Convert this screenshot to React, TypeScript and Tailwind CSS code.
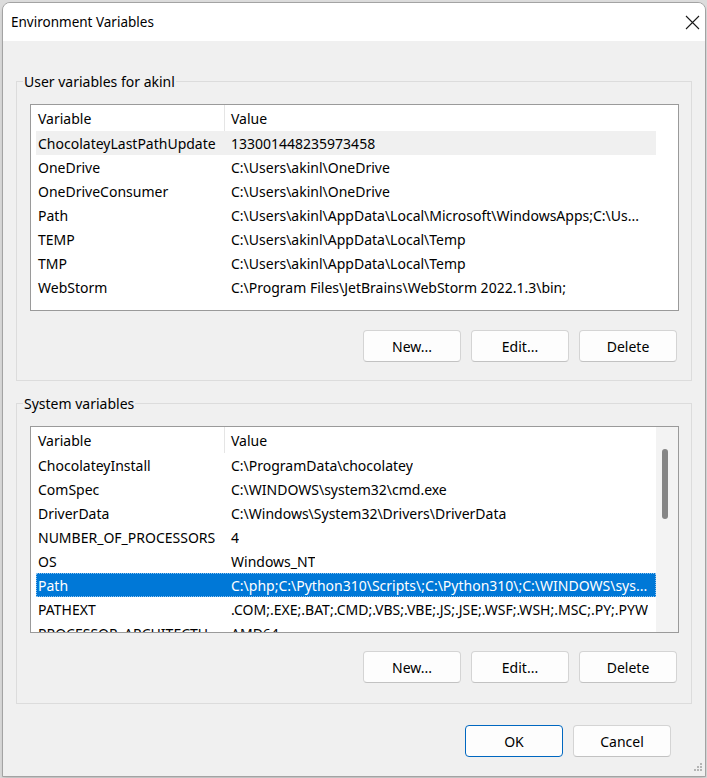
import React from 'react';

const userVars = [
  ['ChocolateyLastPathUpdate', '133001448235973458'],
  ['OneDrive', 'C:\\Users\\akinl\\OneDrive'],
  ['OneDriveConsumer', 'C:\\Users\\akinl\\OneDrive'],
  ['Path', 'C:\\Users\\akinl\\AppData\\Local\\Microsoft\\WindowsApps;C:\\Us...'],
  ['TEMP', 'C:\\Users\\akinl\\AppData\\Local\\Temp'],
  ['TMP', 'C:\\Users\\akinl\\AppData\\Local\\Temp'],
  ['WebStorm', 'C:\\Program Files\\JetBrains\\WebStorm 2022.1.3\\bin;'],
];

const systemVars = [
  ['ChocolateyInstall', 'C:\\ProgramData\\chocolatey'],
  ['ComSpec', 'C:\\WINDOWS\\system32\\cmd.exe'],
  ['DriverData', 'C:\\Windows\\System32\\Drivers\\DriverData'],
  ['NUMBER_OF_PROCESSORS', '4'],
  ['OS', 'Windows_NT'],
  ['Path', 'C:\\php;C:\\Python310\\Scripts\\;C:\\Python310\\;C:\\WINDOWS\\sys...'],
  ['PATHEXT', '.COM;.EXE;.BAT;.CMD;.VBS;.VBE;.JS;.JSE;.WSF;.WSH;.MSC;.PY;.PYW'],
  ['PROCESSOR_ARCHITECTU...', 'AMD64'],
];

function Button({ label, primary = false }: { label: string; primary?: boolean }) {
  return (
    <button
      className={`w-[98px] h-[32px] rounded-[4px] bg-[#fdfdfd] text-[14px] text-black border ${
        primary ? 'border-[#0067c0]' : 'border-[#d4d4d4] border-b-[#c2c2c2]'
      }`}
    >
      {label}
    </button>
  );
}

function VarList({
  rows,
  height,
  hoverIndex,
  selectedIndex,
  scrollbar,
}: {
  rows: string[][];
  height: string;
  hoverIndex?: number;
  selectedIndex?: number;
  scrollbar?: boolean;
}) {
  return (
    <div className={`ml-[13px] mr-[12px] ${height} border border-[#9a9a9a] bg-white flex overflow-hidden`}>
      <div className="w-[625px] pl-[5px] flex flex-col shrink-0">
        <div className="h-[26px] flex items-center shrink-0">
          <div className="w-[188px] pl-[2px] h-full flex items-center">Variable</div>
          <div className="w-px h-full bg-[#e5e5e5]" />
          <div className="pl-[6px]">Value</div>
        </div>
        {rows.map(([name, value], i) => (
          <div
            key={name + i}
            className={`h-[24px] flex items-center shrink-0 whitespace-nowrap ${
              i === selectedIndex
                ? 'bg-[#0078d7] text-white outline-1 outline-dotted outline-[#8fc3ee] -outline-offset-1'
                : i === hoverIndex
                ? 'bg-[#f0f0f0]'
                : ''
            }`}
          >
            <div className="w-[189px] pl-[2px] overflow-hidden">{name}</div>
            <div className="pl-[6px] overflow-hidden">{value}</div>
          </div>
        ))}
      </div>
      {scrollbar ? (
        <div className="flex-1 bg-[#f3f3f3] pt-[22px] pl-[6px]">
          <div className="w-[6px] h-[70px] rounded-full bg-[#868686]" />
        </div>
      ) : (
        <div className="flex-1" />
      )}
    </div>
  );
}

export default function App() {
  return (
    <div className="w-[707px] h-[778px] bg-[#dcdcdc] pt-[2px] pl-[2px] overflow-hidden font-['Noto_Sans',sans-serif] text-[14px] text-black">
      <div className="relative w-[704px] h-[775px] rounded-t-[8px] border border-[#a3a3a3] bg-[#f0f0f0] flex flex-col overflow-hidden shadow-md">
        <div className="h-[38px] bg-white flex items-center justify-between pl-[8px] pr-[5px] shrink-0">
          <span className="text-[13.5px]">Environment Variables</span>
          <svg width="15" height="15" viewBox="0 0 15 15">
            <path d="M1 1L14 14M14 1L1 14" stroke="#1a1a1a" strokeWidth="1.1" />
          </svg>
        </div>

        <fieldset className="mt-[31px] mx-[13px] border border-[#dcdcdc] pb-[18px]">
          <legend className="ml-[6px] px-[1px] leading-[19px]">User variables for akinl</legend>
          <div className="mt-[13px]">
            <VarList rows={userVars} height="h-[207px]" hoverIndex={0} />
          </div>
          <div className="mt-[19px] flex justify-end gap-[10px] pr-[14px]">
            <Button label="New..." />
            <Button label="Edit..." />
            <Button label="Delete" />
          </div>
        </fieldset>

        <fieldset className="mt-[13px] mx-[13px] border border-[#dcdcdc] pb-[20px]">
          <legend className="ml-[6px] px-[1px] leading-[19px]">System variables</legend>
          <div className="mt-[13px]">
            <VarList rows={systemVars} height="h-[207px]" selectedIndex={5} scrollbar />
          </div>
          <div className="mt-[18px] flex justify-end gap-[10px] pr-[14px]">
            <Button label="New..." />
            <Button label="Edit..." />
            <Button label="Delete" />
          </div>
        </fieldset>

        <div className="mt-[21px] flex justify-end gap-[10px] pr-[34px]">
          <Button label="OK" primary />
          <Button label="Cancel" />
        </div>

        <svg className="absolute right-[2px] bottom-[2px]" width="12" height="12" viewBox="0 0 12 12">
          <rect x="9" y="1" width="2" height="2" fill="#b5b5b5" />
          <rect x="6" y="4" width="2" height="2" fill="#b5b5b5" />
          <rect x="9" y="4" width="2" height="2" fill="#b5b5b5" />
          <rect x="3" y="7" width="2" height="2" fill="#b5b5b5" />
          <rect x="6" y="7" width="2" height="2" fill="#b5b5b5" />
          <rect x="9" y="7" width="2" height="2" fill="#b5b5b5" />
        </svg>
      </div>
    </div>
  );
}
